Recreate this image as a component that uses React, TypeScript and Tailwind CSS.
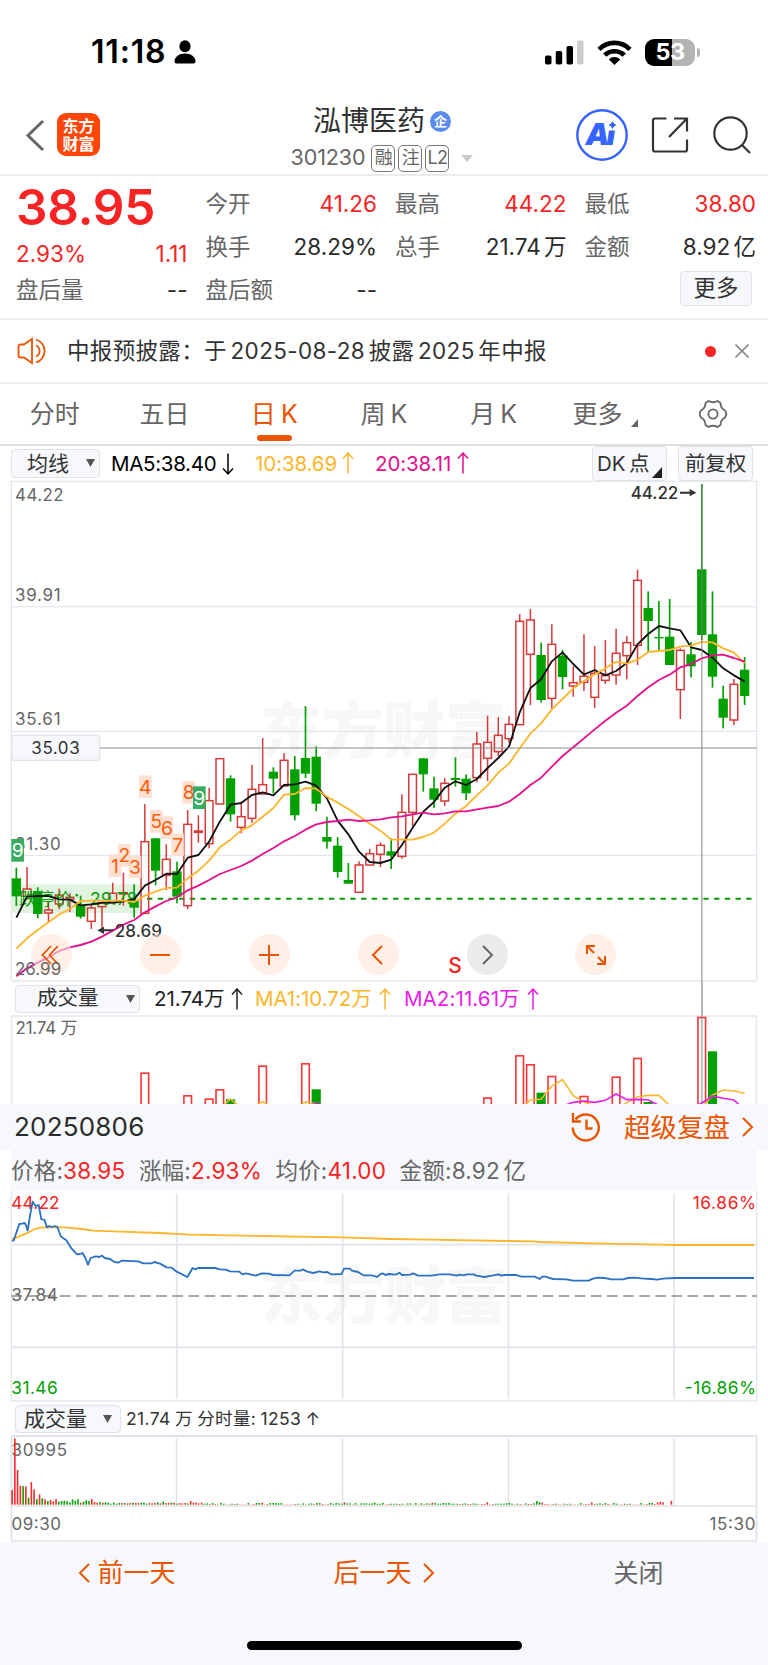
import React from "react";
import clsx from "clsx";

type Color = "r" | "g";
// [color, high, bodyTop, bodyBottom, low]
type Candle = [Color, number, number, number, number];

const candles: Candle[] = [
  ["g", 1163, 1195, 1249, 1278], ["r", 1161, 1227, 1249, 1250], ["g", 1222, 1233, 1302, 1315],
  ["r", 1266, 1290, 1299, 1326], ["r", 1226, 1245, 1272, 1288], ["r", 1240, 1252, 1258, 1296],
  ["g", 1247, 1275, 1310, 1316], ["r", 1270, 1284, 1324, 1347], ["r", 1268, 1270, 1280, 1345],
  ["r", 1208, 1240, 1268, 1268], ["r", 1178, 1238, 1242, 1277], ["g", 1213, 1262, 1283, 1313],
  ["r", 972, 1085, 1300, 1302], ["g", 1075, 1075, 1172, 1216], ["r", 1093, 1138, 1186, 1230],
  ["g", 1145, 1174, 1250, 1270], ["r", 990, 1033, 1277, 1287], ["r", 1006, 1053, 1057, 1088],
  ["r", 923, 962, 1091, 1105], ["r", 836, 836, 972, 972], ["g", 886, 895, 1003, 1025],
  ["r", 965, 1010, 1042, 1060], ["r", 854, 928, 1015, 1028], ["r", 774, 914, 942, 942],
  ["g", 862, 875, 896, 940], ["r", 820, 841, 918, 918], ["g", 828, 868, 1006, 1021],
  ["g", 678, 834, 881, 894], ["g", 799, 830, 971, 994], ["g", 1010, 1071, 1085, 1106],
  ["g", 1071, 1097, 1176, 1193], ["g", 1149, 1200, 1211, 1211], ["r", 1144, 1155, 1237, 1237],
  ["r", 1106, 1121, 1155, 1155], ["r", 1087, 1096, 1123, 1161], ["g", 1075, 1114, 1127, 1167],
  ["r", 943, 997, 1129, 1136], ["r", 883, 883, 997, 1038], ["g", 835, 835, 883, 935],
  ["g", 890, 925, 959, 984], ["r", 894, 910, 963, 978], ["g", 832, 894, 900, 920],
  ["g", 883, 896, 940, 960], ["r", 756, 792, 893, 907], ["r", 707, 787, 835, 903],
  ["r", 712, 766, 815, 828], ["r", 709, 733, 776, 788], ["r", 402, 424, 734, 734],
  ["r", 387, 420, 523, 676], ["g", 488, 525, 660, 668], ["r", 433, 493, 655, 686],
  ["g", 510, 527, 591, 628], ["r", 559, 608, 618, 650], ["r", 463, 589, 607, 633],
  ["r", 498, 580, 652, 684], ["r", 480, 587, 601, 612], ["r", 446, 520, 585, 614],
  ["r", 468, 488, 527, 598], ["r", 269, 301, 496, 555], ["g", 334, 384, 423, 515],
  ["g", 363, 471, 475, 510], ["g", 357, 470, 555, 555], ["r", 505, 511, 629, 717],
  ["g", 486, 523, 559, 592], ["g", 12, 268, 465, 480], ["g", 334, 463, 590, 623],
  ["g", 617, 656, 713, 745], ["r", 597, 613, 720, 735], ["g", 531, 569, 648, 675],
];

const ma5 = [
  1313, 1250, 1248, 1248, 1258, 1259, 1276, 1273, 1268, 1268, 1264, 1258, 1217, 1200, 1181, 1182, 1133, 1125,
  1085, 1025, 974, 969, 945, 937, 946, 915, 913, 905, 917, 955, 1022, 1063, 1115, 1146, 1149, 1139, 1095, 1043,
  995, 966, 923, 904, 915, 897, 864, 834, 800, 697, 624, 598, 544, 517, 552, 584, 570, 586, 573, 549, 493, 462,
  438, 445, 451, 502, 510, 533, 565, 586, 604,
];
const ma10 = [
  1406, 1375, 1350, 1327, 1303, 1287, 1263, 1262, 1262, 1262, 1262, 1266, 1247, 1235, 1224, 1223, 1195, 1172,
  1142, 1102, 1079, 1051, 1036, 1010, 984, 944, 942, 924, 926, 950, 968, 987, 1009, 1031, 1052, 1079, 1079, 1079,
  1071, 1058, 1031, 1001, 978, 946, 916, 878, 851, 805, 761, 730, 688, 657, 625, 603, 583, 565, 545, 551, 539,
  516, 513, 510, 500, 497, 486, 487, 505, 518, 550,
];
const ma20 = [
  1489, 1465, 1448, 1432, 1413, 1402, 1395, 1385, 1370, 1352, 1334, 1320, 1297, 1279, 1263, 1252, 1231, 1217,
  1200, 1182, 1170, 1158, 1142, 1122, 1104, 1084, 1068, 1049, 1033, 1026, 1023, 1019, 1023, 1021, 1018, 1012,
  1009, 1003, 998, 1003, 1000, 994, 994, 988, 983, 978, 965, 942, 915, 893, 860, 828, 802, 775, 748, 722, 698,
  677, 648, 622, 600, 584, 562, 552, 535, 526, 524, 534, 545,
];

// [label, x, y, isGreen]
const marks: [string, number, number, boolean][] = [
  ["9", 34, 1077, true], ["1", 326, 1123, false], ["2", 354, 1092, false], ["3", 386, 1127, false],
  ["4", 417, 886, false], ["5", 450, 990, false], ["6", 482, 1009, false], ["7", 514, 1060, false],
  ["8", 547, 903, false], ["9", 579, 919, true],
];

// [candle index, top, color]
const volumes: [number, number, Color][] = [
  [12, 278, "r"], [16, 346, "r"], [18, 356, "r"], [19, 328, "r"], [20, 358, "g"], [23, 257, "r"], [27, 250, "r"],
  [28, 328, "g"], [44, 353, "r"], [47, 226, "r"], [48, 253, "r"], [49, 338, "g"], [50, 288, "r"], [53, 348, "r"],
  [56, 290, "r"], [58, 234, "r"], [59, 366, "g"], [64, 111, "r"], [65, 214, "g"],
];
const volMa1: [number, number][][] = [
  [[19, 385], [20, 357], [21, 385]],
  [[22, 382], [23, 365], [24, 382]],
  [[26, 388], [27, 366], [28, 371], [29, 388]],
  [[47, 387], [48, 360], [49, 358], [50, 318], [51, 299], [52, 347], [53, 366], [54, 378]],
  [[56, 388], [57, 368], [58, 350], [59, 346], [60, 346], [61, 377]],
  [[64, 384], [65, 345], [66, 330], [67, 333], [68, 340]],
];
const volMa2: [number, number][][] = [
  [[27, 378], [28, 371], [29, 377]],
  [[51, 378], [52, 367], [53, 363], [54, 367], [55, 361], [56, 342], [57, 359], [58, 358], [59, 360], [60, 376]],
  [[63, 388], [64, 369], [65, 348], [66, 355], [67, 360], [68, 390]],
];

const avgLine =
  "36,178 50,172 85,158 100,149 120,143 150,141 195,142 245,147 280,152 360,155 480,159 570,164 780,168 1027,172 1174,177 1284,179 1524,183 1599,184 1620,186 1780,190 1985,194 2022,195 2262,195";
const priceLine =
  "36,183 41,181 58,132 66,131 74,129 78,136 83,152 90,107 98,65 107,78 116,75 124,118 133,119 141,142 148,138 156,141 165,138 172,141 182,168 190,175 199,181 215,206 231,223 240,222 248,219 256,234 264,254 272,234 287,229 298,231 306,227 314,234 330,237 343,246 355,248 364,242 415,244 430,250 454,250 463,246 480,251 500,262 515,263 530,275 562,291 578,264 586,268 594,264 645,264 660,268 677,269 690,274 718,275 727,283 737,280 768,287 785,280 805,281 820,285 868,286 884,272 902,272 908,268 922,275 940,279 958,274 970,277 982,276 993,283 1025,282 1032,266 1049,266 1056,272 1074,276 1090,286 1116,286 1131,291 1140,283 1148,280 1156,285 1166,282 1188,284 1198,278 1206,285 1230,284 1239,280 1254,287 1294,287 1319,283 1349,283 1371,287 1379,284 1389,286 1401,283 1421,283 1429,287 1454,291 1476,287 1496,283 1504,287 1514,285 1549,285 1564,290 1604,290 1619,297 1627,290 1636,290 1659,297 1699,298 1719,302 1766,302 1779,296 1794,293 1814,294 1834,298 1869,298 1884,294 1904,293 1924,295 1954,297 1972,299 1989,296 2024,294 2262,294";

const openingMinutes: [Color, number][] = [
  ["r", 44], ["r", 199], ["r", 104], ["r", 57], ["g", 56], ["r", 55], ["g", 21], ["r", 68], ["r", 46], ["g", 17],
  ["r", 31], ["g", 19], ["r", 16], ["g", 11], ["r", 14], ["r", 10], ["r", 17], ["g", 9], ["g", 11], ["g", 12],
  ["g", 11], ["g", 7], ["g", 16], ["g", 12], ["g", 16], ["r", 6], ["g", 9], ["g", 13], ["g", 11], ["r", 17],
  ["r", 8], ["r", 6], ["g", 8], ["r", 6], ["g", 7], ["g", 6],
];
const spikes: Record<number, [Color, number]> = {
  53: ["g", 7], 55: ["g", 9], 65: ["r", 11], 67: ["r", 6], 91: ["r", 6], 121: ["r", 7], 132: ["g", 6],
  153: ["r", 6], 173: ["r", 7], 191: ["g", 11], 192: ["g", 8], 193: ["r", 6], 211: ["r", 7], 235: ["r", 7],
  236: ["r", 9], 237: ["r", 7], 240: ["r", 11],
};
const minutes: [Color, number][] = Array.from({ length: 241 }, (_, i) => {
  if (i < openingMinutes.length) return openingMinutes[i];
  if (spikes[i]) return spikes[i];
  if (i > 237) return ["r", 0];
  const n = (i * 37 + ((i * i) % 11) * 5) % 13;
  return [n % 5 < 2 ? "r" : "g", i < 70 ? 3 + (n % 4) : 1 + (n % 5)];
});

const RED = "#d63a3a";
const GREEN = "#03a003";
const cx = (i: number) => 49 + i * 32.13;
const toLine = (values: number[]) => values.map((y, i) => `${cx(i)},${y}`).join(" ");
const volLine = (points: [number, number][]) => points.map(([i, y]) => `${cx(i) / 3},${y / 3 - 35}`).join(" ");

const Arrow = ({ down, className }: { down?: boolean; className?: string }) => (
  <svg width="12" height="24" viewBox="0 0 12 24" fill="none" stroke="currentColor" strokeWidth="1.500" className={clsx("shrink-0", className)}>
    {down ? <path d="M6 1.500v20M1 16.500l5 5.500 5-5.500" /> : <path d="M6 21.500v-20M1 6.500L6 1l5 5.500" />}
  </svg>
);

const Chevron = ({ left, className }: { left?: boolean; className?: string }) => (
  <svg width="12" height="20" viewBox="0 0 12 20" fill="none" stroke="currentColor" strokeWidth="2" className={className}>
    <path d={left ? "M11 1L2 10l9 9" : "M1 1l9 9-9 9"} />
  </svg>
);

const Caret = ({ className }: { className?: string }) => (
  <svg width="9" height="8" viewBox="0 0 9 8" fill="#555" className={className}>
    <path d="M0 0h9L4.500 8z" />
  </svg>
);

const StatusBar = () => (
  <div className="flex h-[94px] items-start justify-between pt-[38px] pl-[91px] pr-[68px]">
    <div className="flex h-[28px] items-center">
      <span className="w-[83px] text-[32px] font-semibold leading-none tracking-[0.8px] text-black">11:18</span>
      <svg width="22" height="24" viewBox="0 0 22 24">
        <ellipse cx="11" cy="6.300" rx="5.600" ry="6" />
        <path d="M0.500 21.500C0.500 17 5 13.500 11 13.500S21.500 17 21.500 21.500Q21.500 23.500 19.500 23.500H2.500Q.5 23.500.5 21.500z" />
      </svg>
    </div>
    <div className="flex h-[28px] items-center">
      <svg width="39" height="25" viewBox="0 0 39 25">
        <rect x="0" y="15.500" width="6.500" height="9" rx="1.800" />
        <rect x="10.700" y="11" width="6.500" height="13.500" rx="1.800" />
        <rect x="21.500" y="6" width="6.500" height="18.500" rx="1.800" />
        <rect x="32" y="0.500" width="6.500" height="24" rx="1.800" fill="#ccc" />
      </svg>
      <svg width="35" height="25" viewBox="0 0 35 25" className="ml-[13px]" fill="none" stroke="#000" strokeWidth="4.600">
        <path d="M2 9.300a22 22 0 0 1 31 0" />
        <path d="M7.700 15.200a14 14 0 0 1 19.600 0" />
        <path d="M17.500 25l-5.700-5.600a8 8 0 0 1 11.400 0z" fill="#000" stroke="none" />
      </svg>
      <div className="ml-[13px] flex h-[27px] w-[50px] items-center justify-center rounded-[9px] bg-[linear-gradient(90deg,#000_53%,#b3b3b3_53%)] text-[23.500px] font-bold leading-none tracking-[-0.5px] text-white">
        53
      </div>
      <div className="ml-[2px] h-[9px] w-[3px] rounded-r-full bg-[#b3b3b3]"></div>
    </div>
  </div>
);

const Header = () => (
  <header className="flex h-[82px] items-start justify-between border-b-2 border-[#ececed] pl-[25px] pr-[17px]">
    <div className="flex w-[240px] pt-[19px]">
      <svg width="20" height="46" viewBox="0 0 20 46" fill="none" stroke="#666" strokeWidth="3">
        <path d="M18 8L3 22.500 18 37" />
      </svg>
      <div className="ml-[12px] flex h-[43px] w-[43px] flex-col items-center justify-center rounded-[9px] bg-[#ff4606] text-[16px] font-bold leading-[18px] text-white">
        <span>东方</span>
        <span>财富</span>
      </div>
    </div>
    <div className="flex flex-col items-center pr-[12px] pt-[11px]">
      <div className="flex items-center">
        <h1 className="text-[28px] leading-[32px] text-[#2f2f2f]">泓博医药</h1>
        <span className="ml-[5px] flex size-[21px] items-center justify-center rounded-full bg-[#5b8bec] text-[13px] font-bold leading-none text-white">
          企
        </span>
      </div>
      <div className="mt-[7px] flex h-[28px] items-center text-[21.500px] text-[#666]">
        <span className="leading-none tracking-[-0.1px]">301230</span>
        {["融", "注", "L2"].map((tag) => (
          <span
            key={tag}
            className="ml-[3px] flex h-[27px] w-[24px] items-center justify-center rounded-[5px] border-[1.500px] border-[#777] text-[18px] leading-none tracking-[-0.5px] nth-[2]:ml-[6px]"
          >
            {tag}
          </span>
        ))}
        <svg width="12" height="7" viewBox="0 0 12 7" fill="#c9c9c9" className="ml-[12px]">
          <path d="M0 0h12L6 7z" />
        </svg>
      </div>
    </div>
    <div className="flex w-[240px] items-center justify-end pt-[15px]">
      <svg width="52" height="52" viewBox="0 0 52 52">
        <circle cx="26" cy="26" r="24.700" fill="none" stroke="#3763ff" strokeWidth="2.400" />
        <text x="9.500" y="35.500" fontSize="30" fontWeight="900" fontStyle="italic" fill="#3763ff" textLength="30">
          Ai
        </text>
        <rect x="31" y="11" width="12" height="10.500" fill="#fff" />
        <path d="M36.500 12l1.500 2.500 2.500 1.500-2.500 1.500-1.500 2.500-1.500-2.500-2.500-1.500 2.500-1.500z" fill="#3763ff" />
      </svg>
      <svg width="38" height="38" viewBox="0 0 38 38" className="ml-[23px]" fill="none" stroke="#333" strokeWidth="2.200">
        <path d="M15.500 2.500H4Q2 2.500 2 4.500v29q0 2 2 2h30q2 0 2-2V23.500" />
        <path d="M23 2.500h13v13M35.500 3L18 21" />
      </svg>
      <svg width="38" height="38" viewBox="0 0 38 38" className="ml-[24px]" fill="none" stroke="#333" strokeWidth="2.200">
        <circle cx="17.500" cy="17.500" r="16.200" />
        <path d="M29 29l8 8" />
      </svg>
    </div>
  </header>
);

const Field = ({ label, value, red, className }: { label: string; value: string; red?: boolean; className?: string }) => (
  <div className={clsx("flex h-[43px] items-center justify-between text-[22.500px] leading-none", className)}>
    <span className="text-[#666]">{label}</span>
    <span className={red ? "text-[#f82323]" : "text-[#2b2b2b]"}>{value}</span>
  </div>
);

const Quote = () => (
  <section className="grid h-[144px] grid-cols-4 gap-x-[18px] border-b-2 border-[#ececed] pl-[16px] pr-[12px] pt-[7px]">
    <div>
      <div className="flex h-[49px] items-center text-[49.500px] font-semibold leading-none tracking-[-0.2px] text-[#f82323]">38.95</div>
      <div className="flex h-[37px] items-center justify-between pt-[8px] text-[22.500px] leading-none text-[#f82323]">
        <span>2.93%</span>
        <span>1.11</span>
      </div>
      <Field label="盘后量" value="--" />
    </div>
    <div>
      <Field label="今开" value="41.26" red />
      <Field label="换手" value="28.29%" />
      <Field label="盘后额" value="--" />
    </div>
    <div>
      <Field label="最高" value="44.22" red />
      <Field label="总手" value="21.74 万" className="[word-spacing:-3px]" />
    </div>
    <div className="flex flex-col">
      <Field label="最低" value="38.80" red />
      <Field label="金额" value="8.92 亿" className="[word-spacing:-3px]" />
      <button className="mr-[4px] mt-[2px] h-[35px] w-[72px] self-end rounded-[4px] border border-[#dfe2e6] bg-[#f6f8fb] text-[22.500px] leading-none text-[#333]">
        更多
      </button>
    </div>
  </section>
);

const Notice = () => (
  <section className="flex h-[64px] items-center border-b-2 border-[#ececed] pl-[17px] pr-[19px]">
    <svg width="32" height="28" viewBox="0 0 32 28" fill="none" stroke="#ea5504" strokeWidth="1.800">
      <path d="M7 7.500L15 2v24l-8-5.500H3.500Q1.500 20.500 1.500 18.500v-9Q1.500 7.500 3.500 7.500z" />
      <path d="M19 8.500a6 6 0 0 1 0 11" />
      <path d="M19 2.500a12 12 0 0 1 0 23" />
    </svg>
    <p className="ml-[18px] flex-1 text-[22.500px] leading-none tracking-[0.34px] text-[#333] [word-spacing:-3px]">
      中报预披露：于 2025-08-28 披露 2025 年中报
    </p>
    <span className="size-[11px] rounded-full bg-[#f82323]"></span>
    <svg width="14" height="14" viewBox="0 0 14 14" stroke="#8a8a8a" strokeWidth="1.600" className="ml-[19px]">
      <path d="M0.500 0.500l13 13M13.500 0.500l-13 13" />
    </svg>
  </section>
);

const tabs = ["分时", "五日", "日 K", "周 K", "月 K", "更多"];

const Tabs = () => (
  <nav className="grid h-[62px] grid-cols-7 border-b-2 border-[#dfdfe1] text-[25px] text-[#666] [word-spacing:-2px]">
    {tabs.map((tab) => (
      <div key={tab} className={clsx("relative flex items-center justify-center leading-none", tab === "日 K" && "text-[#ea5504]")}>
        {tab}
        {tab === "日 K" && <span className="absolute bottom-[3px] h-[6px] w-[35px] rounded-[3px] bg-[#ea5504]"></span>}
        {tab === "更多" && (
          <svg width="7" height="8" viewBox="0 0 7 8" fill="#666" className="-mr-[4px] ml-[9px] mt-[18px]">
            <path d="M7 0v8H0z" />
          </svg>
        )}
      </div>
    ))}
    <div className="flex items-center justify-center">
      <svg width="30" height="30" viewBox="0 0 30 30" fill="none" stroke="#666" strokeWidth="1.800" strokeLinejoin="round">
        <path d="M10.500 2Q15 4.500 19.500 2L22.500 4Q22.500 9 27 11.500Q29.500 15 27 18.500Q22.500 21 22.500 26L19.500 28Q15 25.500 10.500 28L7.500 26Q7.500 21 3 18.500Q.5 15 3 11.500Q7.500 9 7.500 4Z" />
        <circle cx="15" cy="15" r="4.600" />
      </svg>
    </div>
  </nav>
);

const MaBar = () => (
  <div className="flex h-[34px] items-center pl-[11px] pr-[15px] text-[20.500px] leading-none tracking-[-0.1px]">
    <button className="flex h-[29px] w-[89px] items-center justify-between rounded-[4px] border border-[#dfe2e6] bg-[#f6f8fb] pl-[15px] pr-[4px] text-[21px] leading-none text-[#333]">
      均线
      <Caret />
    </button>
    <span className="ml-[11px] flex w-[144px] items-center pt-[2px] tracking-[-0.3px] text-black">
      MA5:38.40
      <Arrow down className="ml-[6px]" />
    </span>
    <span className="flex w-[120px] items-center pt-[2px] text-[#fdb52b]">
      10:38.69
      <Arrow className="ml-[5px]" />
    </span>
    <span className="flex flex-1 items-center pt-[2px] text-[#e5108c]">
      20:38.11
      <Arrow className="ml-[6px]" />
    </span>
    <button className="relative flex h-[35px] w-[75px] items-center justify-start rounded-[4px] border border-[#dfe2e6] bg-[#f6f8fb] pl-[4px] pt-[2px] text-[20.500px] text-[#333] [word-spacing:-2px]">
      DK 点
      <svg width="10" height="11" viewBox="0 0 10 11" fill="#222" className="absolute bottom-[2px] right-[4px]">
        <path d="M10 0v11H0z" />
      </svg>
    </button>
    <button className="ml-[11px] flex h-[35px] w-[75px] items-center justify-center rounded-[4px] border border-[#dfe2e6] bg-[#f6f8fb] pt-[2px] text-[20.500px] text-[#333]">
      前复权
    </button>
  </div>
);

const CandleShape = ({ i, candle }: { i: number; candle: Candle }) => {
  const [color, high, top, bottom, low] = candle;
  const x = cx(i);
  if (color === "g") {
    return (
      <g fill={GREEN}>
        <rect x={x - 2.5} y={high} width="5" height={low - high} />
        <rect x={x - 14} y={top} width="28" height={bottom - top} />
      </g>
    );
  }
  return (
    <g stroke={RED} strokeWidth="4.500" fill="none">
      <path d={`M${x} ${high}V${top}M${x} ${bottom}V${low}`} />
      <rect x={x - 11.500} y={top} width="23" height={bottom - top} />
    </g>
  );
};

const circles = "flex size-[41px] items-center justify-center rounded-full bg-[#ffe4d6]/60 text-[#ea5504]";

const KChart = () => (
  <section className="relative h-[502px]">
    <svg width="768" height="502" viewBox="0 0 2304 1506" fontSize="51" fill="none" className="block">
      <text x="780" y="822" fontSize="186" fontWeight="900" fill="#f7f7f7" textLength="740">
        东方财富
      </text>
      <g stroke="#e4e7ef" strokeWidth="4">
        <path d="M34 4H2270V1502H34zM34 380H2270M34 754H2270M34 1126H2270" />
      </g>
      <path d="M34 1502H2270" stroke="#ececee" strokeWidth="6" />
      <g fill="#666">
        <text x="45" y="63" textLength="146">44.22</text>
        <text x="45" y="363" textLength="137">39.91</text>
        <text x="45" y="736" textLength="137">35.61</text>
        <text x="45" y="1110" textLength="137">31.30</text>
      </g>
      <rect x="34" y="1213" width="386" height="86" fill="#dff3df" />
      <path d="M441 1256H2260" stroke={GREEN} strokeWidth="6" strokeDasharray="16 16.100" />
      {candles.map((candle, i) => (
        <CandleShape key={i} i={i} candle={candle} />
      ))}
      <text x="58" y="1276" fontSize="52" fill={GREEN} textLength="354">
        跌停价：29.78
      </text>
      <g strokeWidth="5.500" strokeLinejoin="round">
        <polyline points={toLine(ma5)} stroke="#111" />
        <polyline points={toLine(ma10)} stroke="#fdb52b" />
        <polyline points={toLine(ma20)} stroke="#e5108c" />
      </g>
      {marks.map(([label, x, y, green]) => (
        <g key={`${label}${x}`}>
          <rect x={x} y={y} width="38" height="68" fill={green ? "#38ad5f" : "#ffdccb"} fillOpacity={green ? 1 : 0.85} />
          <text x={x + 19} y={y + 55} fontSize="58" textAnchor="middle" fill={green ? "#fff" : "#ff5a0a"}>
            {label}
          </text>
        </g>
      ))}
      <g fill="#333" stroke="none" fontWeight="500">
        <text x="344" y="1371" textLength="142">28.69</text>
        <path d="M292 1351l20-11v8h28v6h-28v8z" />
        <text x="1892" y="56" textLength="143">44.22</text>
        <path d="M2089 38l-20-11v8h-29v6h29v8z" />
      </g>
      <path d="M300 804H2270" stroke="#8c8c8c" strokeWidth="3.500" />
      <path d="M2105.500 12V1506" stroke="#808080" strokeOpacity=".6" strokeWidth="5" />
      <rect x="35" y="766" width="264" height="75" rx="10" fill="#f6f8fb" stroke="#dfe2e6" strokeWidth="4" />
      <text x="94" y="823" fill="#333" textLength="145">35.03</text>
      <text x="1345" y="1478" fontSize="63" fontWeight="500" fill="#f82323">S</text>
    </svg>
    <div className="absolute left-[31px] top-[454px] flex gap-[67.900px]">
      <button className={circles}>
        <svg width="18" height="20" viewBox="0 0 18 20" fill="none" stroke="currentColor" strokeWidth="1.800" className="-ml-[4px]">
          <path d="M10 1L1.500 10 10 19M17 1L8.500 10 17 19" />
        </svg>
      </button>
      <button className={circles}>
        <span className="h-[2px] w-[20px] bg-[#ea5504]"></span>
      </button>
      <button className={circles}>
        <svg width="20" height="20" viewBox="0 0 20 20" stroke="currentColor" strokeWidth="2">
          <path d="M0 10h20M10 0v20" />
        </svg>
      </button>
      <button className={circles}>
        <Chevron left className="mr-[2px]" />
      </button>
      <button className="flex size-[41px] items-center justify-center rounded-full bg-[#ebebeb] text-[#666]">
        <Chevron className="ml-[2px]" />
      </button>
      <button className={circles}>
        <svg width="20" height="20" viewBox="0 0 20 20" fill="none" stroke="currentColor" strokeWidth="2">
          <path d="M9 1H1v8M1 1l7 7M11 19h8v-8M19 19l-7-7" />
        </svg>
      </button>
    </div>
    <span className="absolute left-[15px] top-[479px] text-[17px] leading-[20px] text-[#666]">26.99</span>
  </section>
);

const VolumeBar = () => (
  <div className="relative flex h-[33px] items-center pl-[15px] text-[20.500px] leading-none">
    <button className="flex h-[28px] w-[125px] items-center justify-between rounded-[4px] border border-[#dfe2e6] bg-[#f6f8fb] pl-[21px] pr-[4px] text-[20.500px] leading-none text-[#333]">
      成交量
      <Caret />
    </button>
    <span className="ml-[14px] flex w-[101px] items-center pt-[2px] text-[#222]">
      21.74万
      <Arrow className="ml-[6px]" />
    </span>
    <span className="flex w-[149px] items-center pt-[2px] tracking-[-0.05px] text-[#fdb52b]">
      MA1:10.72万
      <Arrow className="ml-[7px]" />
    </span>
    <span className="flex items-center pt-[2px] tracking-[0.1px] text-[#e81ce8]">
      MA2:11.61万
      <Arrow className="ml-[7px]" />
    </span>
    <span className="absolute left-[701px] top-0 h-full w-[2px] bg-[#b3b3b3]"></span>
  </div>
);

const VolumeChart = () => (
  <svg width="768" height="89" viewBox="0 0 768 89" fill="none" className="block">
    <path d="M11.500 89V1H756.500V89" stroke="#e4e7ef" strokeWidth="1.500" />
    <text x="15.500" y="18.500" fontSize="17" fill="#666" textLength="62">
      21.74 万
    </text>
    {volumes.map(([i, top, color]) =>
      color === "r" ? (
        <rect key={i} x={cx(i) / 3 - 3.8} y={top / 3 - 34.500} width="7.600" height="100" stroke="#f83535" strokeWidth="1.600" />
      ) : (
        <rect key={i} x={cx(i) / 3 - 4.6} y={top / 3 - 35} width="9.200" height="100" fill={GREEN} />
      )
    )}
    <path d="M701.800 0V89" stroke="#808080" strokeOpacity=".6" strokeWidth="1.600" />
    {volMa1.map((points, i) => (
      <polyline key={i} points={volLine(points)} stroke="#fdb52b" strokeWidth="1.600" />
    ))}
    {volMa2.map((points, i) => (
      <polyline key={i} points={volLine(points)} stroke="#e81ce8" strokeWidth="1.600" />
    ))}
  </svg>
);

const ReplayHeader = () => (
  <div className="flex h-[46px] items-center bg-[#f6f8fb] pl-[14px] pr-[14px] leading-none">
    <span className="flex-1 text-[26px] tracking-[0.2px] text-[#2b2b2b]">20250806</span>
    <svg width="30" height="30" viewBox="0 0 30 30" fill="none" stroke="#ea5504" strokeWidth="2.400">
      <path d="M4.500 7.500a13 13 0 1 1-2.700 8" />
      <path d="M2 1v8.500h8M15.500 7.500v9h6" />
    </svg>
    <span className="ml-[23px] text-[26.500px] text-[#ea5504]">超级复盘</span>
    <Chevron className="ml-[12px] text-[#ea5504]" />
  </div>
);

const stats = [
  { label: "价格:", value: "38.95", red: true },
  { label: "涨幅:", value: "2.93%", red: true },
  { label: "均价:", value: "41.00", red: true },
  { label: "金额:", value: "8.92 亿", red: false },
];

const Stats = () => (
  <div className="mx-[11px] flex h-[41px] items-center gap-[13.500px] bg-[#f6f8fb] pt-[2px] text-[22.500px] leading-none tracking-[0.2px] text-[#666] [word-spacing:-3px]">
    {stats.map((s) => (
      <span key={s.label}>
        {s.label}
        <span className={s.red ? "text-[#f82323]" : ""}>{s.value}</span>
      </span>
    ))}
  </div>
);

const IntradayChart = () => (
  <svg width="768" height="211" viewBox="0 33 2304 633" fontSize="52" fill="none" className="block">
    <text x="782" y="418" fontSize="186" fontWeight="900" fill="#f7f7f7" textLength="740">
      东方财富
    </text>
    <path d="M34 34V663H2270V34" stroke="#e4e7ef" strokeWidth="4" />
    <path d="M530 40V657M1028 40V657M1525.500 40V657M2022 40V657M34 194H2270M34 502H2270" stroke="#e0e4ec" strokeWidth="5" />
    <path d="M34 348H2270" stroke="#8c8c8c" strokeWidth="5" strokeDasharray="32 16.300" />
    <text x="34" y="86" fill="#f82323" textLength="145">44.22</text>
    <text x="34" y="364" fill="#666" textLength="140">37.84</text>
    <text x="34" y="643" fill="#03a003" textLength="139">31.46</text>
    <text x="2268" y="86" fill="#f82323" textAnchor="end" textLength="190">16.86%</text>
    <text x="2268" y="643" fill="#03a003" textAnchor="end" textLength="214">-16.86%</text>
    <polyline points={avgLine} stroke="#fdb52b" strokeWidth="5.500" strokeLinejoin="round" />
    <polyline points={priceLine} stroke="#2b72c4" strokeWidth="5.500" strokeLinejoin="round" />
  </svg>
);

const MinuteBar = () => (
  <div className="flex h-[33px] items-center pl-[15px] leading-none">
    <button className="flex h-[28px] w-[106px] items-center justify-between rounded-[4px] border border-[#dfe2e6] bg-[#f6f8fb] pl-[8px] pr-[8px] text-[21px] leading-none text-[#333]">
      成交量
      <Caret />
    </button>
    <span className="ml-[5px] pt-px text-[17.500px] tracking-[0.38px] text-[#333] [word-spacing:-1px]">21.74 万 分时量: 1253 ↑</span>
  </div>
);

const MinuteVolume = () => (
  <svg width="768" height="107" viewBox="0 0 768 107" fill="none" fontSize="17" className="block">
    <path d="M11.500 1V106M756.500 1V106M11 1H757" stroke="#dfe2ea" strokeWidth="1.800" />
    <path d="M176.500 3V70M342.500 3V70M508.500 3V70M674 3V70" stroke="#e0e4ec" strokeWidth="1.500" />
    <path d="M11 71H757M11 106H757" stroke="#e8e9ed" strokeWidth="2" />
    <text x="11.500" y="21" fill="#666" textLength="55.500">30995</text>
    {minutes.map(([color, h], i) => (
      <rect key={i} x={11.300 + i * 2.747} y={69.700 - h / 3} width="1.600" height={h / 3} fill={color === "r" ? "#f52a2a" : GREEN} />
    ))}
    <text x="11.500" y="95" fill="#666" textLength="49.500">09:30</text>
    <text x="755.500" y="95" fill="#666" textAnchor="end" textLength="46">15:30</text>
  </svg>
);

const Footer = () => (
  <footer className="flex flex-1 flex-col items-center justify-between bg-[#f6f8fb] pb-[15px] pt-[15px] leading-none">
    <div className="grid h-[32px] w-full grid-cols-3 text-[26px] text-[#ea5504]">
      <span className="flex items-center justify-center pr-[2px]">
        <Chevron left className="mr-[7px]" />
        前一天
      </span>
      <span className="flex items-center justify-center">
        后一天
        <Chevron className="ml-[11px]" />
      </span>
      <span className="flex items-center justify-center pr-[3px] text-[25px] text-[#666]">关闭</span>
    </div>
    <div className="h-[9px] w-[275px] rounded-full bg-black"></div>
  </footer>
);

const App = () => {
  return (
    <main className="flex h-[1665px] w-[768px] flex-col overflow-hidden bg-white font-['Inter','Noto_Sans_CJK_SC',sans-serif]">
      <StatusBar />
      <Header />
      <Quote />
      <Notice />
      <Tabs />
      <MaBar />
      <KChart />
      <VolumeBar />
      <VolumeChart />
      <ReplayHeader />
      <Stats />
      <IntradayChart />
      <MinuteBar />
      <MinuteVolume />
      <Footer />
    </main>
  );
};

export default App;
